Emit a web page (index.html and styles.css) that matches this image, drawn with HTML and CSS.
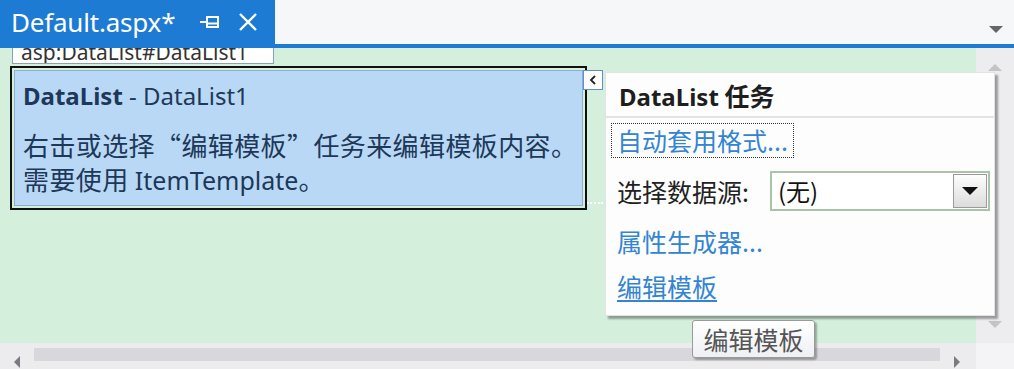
FILE: index.html
```html
<!doctype html>
<html lang="zh-CN">
  <head>
    <meta charset="utf-8">
    <link rel="stylesheet" href="styles.css">
    <title>Default.aspx</title>
  </head>
  <body>
    <div id="window">
      <div class="tabbar">
        <div class="tab">
          <span class="tab-title">Default.aspx*</span>
          <svg class="pin" width="20" height="14" viewBox="0 0 20 14">
            <path d="M0 7h6M7 1v12M7 2h11v10h-11M7 8.5h11" fill="none" stroke="#fff" stroke-width="2"/>
          </svg>
          <svg class="close" width="20" height="20" viewBox="0 0 20 20">
            <path d="M2 2l16 16M18 2L2 18" stroke="#fff" stroke-width="2.4"/>
          </svg>
        </div>
        <div class="tab-fill"><span class="drop-arrow"></span></div>
      </div>
      <div class="tabline"></div>

      <div class="main">
        <div class="canvas">
          <div class="tag"><span>asp:DataList#DataList1</span></div>
          <div class="datalist">
            <div class="datalist-inner">
              <div class="dl-title"><b>DataList</b> - DataList1</div>
              <div class="dl-text">右击或选择“编辑模板”任务来编辑模板内容。<br>需要使用 <span class="lat">ItemTemplate</span>。</div>
            </div>
            <div class="chevron">
              <svg width="10" height="12" viewBox="0 0 10 12"><path d="M7 2L3 6l4 4" fill="none" stroke="#222" stroke-width="1.8"/></svg>
            </div>
            <div class="handle"></div>
          </div>
        </div>
        <div class="vscroll">
          <span class="arrow-up"></span>
          <span class="arrow-down"></span>
        </div>
      </div>

      <div class="bottom">
        <div class="hscroll">
          <span class="arrow-left"></span>
          <div class="thumb"></div>
          <span class="arrow-right"></span>
        </div>
        <div class="corner"></div>
      </div>

      <div class="tasks">
        <div class="tasks-head"><span class="lat">DataList</span> 任务</div>
        <div class="task-row"><a class="link focused">自动套用格式...</a></div>
        <div class="task-row select-row">
          <span class="select-label">选择数据源:</span>
          <div class="select">
            <span>(无)</span>
            <div class="select-btn"><span class="tri"></span></div>
          </div>
        </div>
        <div class="task-row"><a class="link">属性生成器...</a></div>
        <div class="task-row"><a class="link under">编辑模板</a></div>
      </div>

      <div class="tooltip">编辑模板</div>
    </div>
  </body>
</html>
```

FILE: styles.css
```css
body {
  margin: 0;
  font-family: "Noto Sans", "Noto Sans CJK SC", sans-serif;
  background: #fff;
}

#window {
  position: relative;
  width: 1014px;
  height: 369px;
  overflow: hidden;
  display: flex;
  flex-direction: column;
}

.lat {
  font-family: "Noto Sans", sans-serif;
}

/* tab strip */
.tabbar {
  display: flex;
  height: 44px;
}

.tab {
  width: 275px;
  background: #1e7bd3;
  display: flex;
  align-items: center;
  color: #fff;
  padding-left: 11px;
  box-sizing: border-box;
}

.tab-title {
  font-size: 26px;
  letter-spacing: -0.2px;
}

.pin {
  margin-left: 25px;
}

.close {
  margin-left: 18px;
}

.tab-fill {
  flex: 1;
  background: #f6f7f9;
  position: relative;
}

.drop-arrow {
  position: absolute;
  right: 11px;
  top: 26px;
  border-left: 7px solid transparent;
  border-right: 7px solid transparent;
  border-top: 7px solid #666;
}

.tabline {
  height: 4px;
  background: #1e7bd3;
}

/* design surface */
.main {
  display: flex;
  height: 295px;
}

.canvas {
  flex: 1;
  background: #d4f0dd;
  padding-left: 12px;
}

.tag {
  width: 262px;
  height: 16px;
  box-sizing: border-box;
  background: #fff;
  border: 1px solid #8aa0b8;
  border-top: 0;
  overflow: hidden;
  font-size: 21px;
  color: #333;
}

.tag span {
  display: block;
  padding-left: 8px;
  line-height: 8px;
}

.datalist {
  position: relative;
  margin-top: 2px;
  margin-left: -2px;
  width: 577px;
  height: 144px;
  box-sizing: border-box;
  border: 2px solid #111;
  padding: 2px;
}

.datalist-inner {
  height: 100%;
  box-sizing: border-box;
  background: #b9d8f6;
  border: 1px solid #8fb0cc;
  padding: 6px 8px;
  color: #1d3858;
}

.dl-title {
  font-size: 24px;
  line-height: 38px;
}

.dl-text {
  margin-top: 13px;
  font-family: "Noto Sans CJK SC", sans-serif;
  font-size: 26px;
  line-height: 34px;
  letter-spacing: 0.4px;
  white-space: nowrap;
}

.dl-text .lat {
  font-size: 25px;
  letter-spacing: 0;
}

.chevron {
  position: absolute;
  left: 571px;
  top: 2px;
  width: 20px;
  height: 20px;
  box-sizing: border-box;
  background: #fff;
  border: 1px solid #5b8fd0;
  display: flex;
  align-items: center;
  justify-content: center;
}

.handle {
  position: absolute;
  left: 575px;
  top: 134px;
  width: 16px;
  border-top: 2px dotted #fff;
}

.vscroll {
  width: 38px;
  background: #ededf0;
  position: relative;
}

.arrow-up {
  position: absolute;
  left: 12px;
  top: 16px;
  border-left: 7px solid transparent;
  border-right: 7px solid transparent;
  border-bottom: 7px solid #c4c4c8;
}

.arrow-down {
  position: absolute;
  left: 12px;
  top: 273px;
  border-left: 7px solid transparent;
  border-right: 7px solid transparent;
  border-top: 7px solid #c4c4c8;
}

/* horizontal scrollbar */
.bottom {
  display: flex;
  height: 26px;
}

.hscroll {
  flex: 1;
  background: #ececef;
  display: flex;
  align-items: center;
  padding: 0 10px 0 14px;
  gap: 14px;
}

.thumb {
  flex: 1;
  height: 13px;
  margin-top: -3px;
  background: #d7d7dc;
}

.arrow-left {
  margin-top: 12px;
  border-top: 6px solid transparent;
  border-bottom: 6px solid transparent;
  border-right: 6px solid #7a7a80;
}

.arrow-right {
  margin-top: 12px;
  margin-right: 6px;
  border-top: 6px solid transparent;
  border-bottom: 6px solid transparent;
  border-left: 6px solid #7a7a80;
}

.corner {
  width: 38px;
  background: #f4f4f6;
}

/* smart tag panel */
.tasks {
  position: absolute;
  left: 605px;
  top: 72px;
  width: 390px;
  height: 244px;
  box-sizing: border-box;
  background: #fdfdfd;
  border: 1px solid #e2e2e2;
  box-shadow: 3px 3px 2px rgba(0, 0, 0, 0.35);
  display: flex;
  flex-direction: column;
  font-family: "Noto Sans CJK SC", sans-serif;
}

.tasks-head {
  height: 43px;
  padding-left: 13px;
  font-size: 25px;
  font-weight: bold;
  line-height: 44px;
  color: #1e1e1e;
  border-bottom: 2px solid #e4e4e4;
}

.tasks-head .lat {
  font-size: 24px;
}

.task-row {
  height: 45px;
  display: flex;
  align-items: center;
  padding-left: 11px;
}

.link {
  font-size: 25px;
  color: #3384d3;
}

.focused {
  margin-left: -6px;
  padding: 0 5px;
  border: 1px dotted #333;
  line-height: 33px;
}

.under {
  text-decoration: underline;
  text-underline-offset: 3px;
}

.select-row {
  height: 55px;
}

.select-label {
  font-size: 25px;
  color: #222;
  width: 153px;
}

.select {
  width: 220px;
  height: 40px;
  box-sizing: border-box;
  border: 2px solid #a9c5a9;
  background: #fff;
  display: flex;
  align-items: center;
  justify-content: space-between;
  padding-left: 6px;
  font-size: 24px;
  color: #111;
}

.select-btn {
  width: 34px;
  height: 34px;
  margin-right: 1px;
  box-sizing: border-box;
  border: 1px solid #9a9a9a;
  background: linear-gradient(#fdfdfd, #dcdcdc);
  display: flex;
  align-items: center;
  justify-content: center;
}

.tri {
  border-left: 8px solid transparent;
  border-right: 8px solid transparent;
  border-top: 8px solid #111;
}

.tooltip {
  position: absolute;
  left: 692px;
  top: 320px;
  width: 123px;
  height: 38px;
  box-sizing: border-box;
  border: 1px solid #999;
  border-radius: 3px;
  background: linear-gradient(#fff, #eef0f4);
  box-shadow: 2px 2px 2px rgba(0, 0, 0, 0.3);
  text-align: center;
  font-family: "Noto Sans CJK SC", sans-serif;
  font-size: 25px;
  line-height: 36px;
  color: #555;
}
```
